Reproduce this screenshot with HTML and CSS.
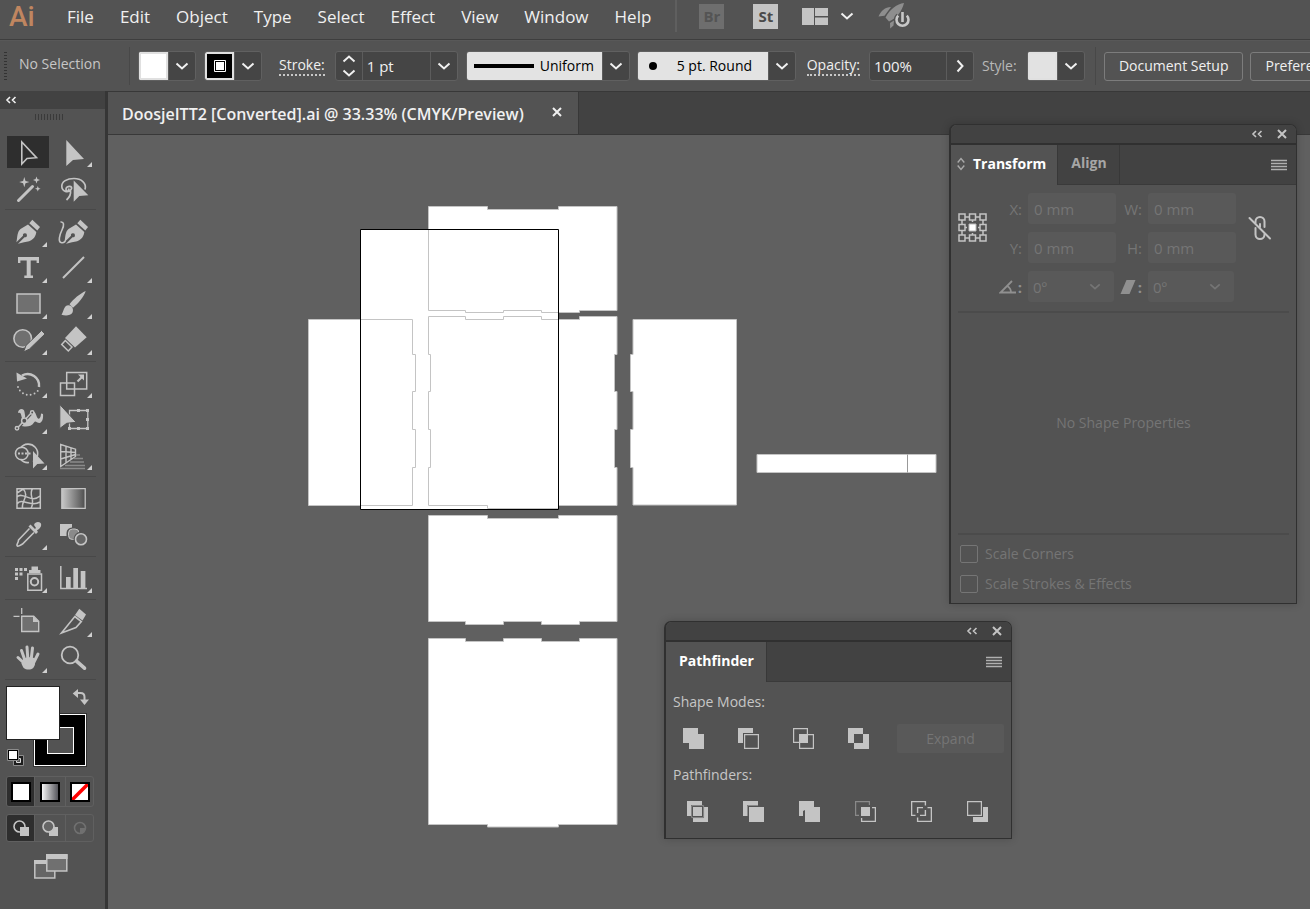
FILE: index.html
```html
<!DOCTYPE html>
<html lang="en">
<head>
<meta charset="utf-8">
<title>DoosjeITT2 [Converted].ai</title>
<link rel="stylesheet" href="styles.css">
</head>
<body>
<svg class="defs" aria-hidden="true">
  <defs>
    <symbol id="caret" viewBox="0 0 14 8"><path d="M1.5 1.5 7 6.5 12.5 1.5" fill="none" stroke="currentColor" stroke-width="2"/></symbol>
    <symbol id="collapse" viewBox="0 0 12 8"><path d="M5 1 2 4l3 3M10.500 1l-3 3 3 3" fill="none" stroke="currentColor" stroke-width="1.600"/></symbol>
    <symbol id="close" viewBox="0 0 10 10"><path d="M1 1 9 9M9 1 1 9" fill="none" stroke="currentColor" stroke-width="2"/></symbol>
    <symbol id="menu" viewBox="0 0 16 12"><path d="M0 1.500h16M0 4.500h16M0 7.500h16M0 10.500h16" stroke="currentColor" stroke-width="1.300"/></symbol>
    <linearGradient id="ramp"><stop offset="0" stop-color="#c8c8c8"/><stop offset="1" stop-color="#4c4c4c"/></linearGradient>
    <linearGradient id="ramp2"><stop offset="0" stop-color="#fff"/><stop offset="1" stop-color="#4c4c52"/></linearGradient>
    <g id="pen">
      <path d="M32.300 219.800 40 227 37.300 230.500 29.300 223.300Z"/>
      <path d="M28 224.500 36.300 232C35.500 238 32 241.500 24 242.300L18 243.800 24.500 237.200A2 2 0 1 0 23 235.700L16.400 242.300C17.500 237 17 232 20.500 229Z"/>
    </g>
  </defs>
</svg>

<header class="menubar">
  <span class="logo">Ai</span>
  <nav class="menus" aria-label="Main menu">
    <button>File</button><button>Edit</button><button>Object</button><button>Type</button><button>Select</button><button>Effect</button><button>View</button><button>Window</button><button>Help</button>
  </nav>
  <div class="apps">
    <button class="app app-off">Br</button>
    <button class="app">St</button>
    <button class="arrange" aria-label="Arrange documents">
      <svg width="26" height="17" viewBox="0 0 26 17" fill="#c4c4c4"><path d="M0 0h12v17H0zM13 0h13v8H13zM13 9.500h13V17H13z"/></svg>
      <svg width="14" height="8"><use href="#caret"/></svg>
    </button>
    <button class="rocket" aria-label="GPU performance">
      <svg width="34" height="28" viewBox="876 2 34 28">
        <path d="M902 3c-7 1-14 6-18.500 14.500l3.500 4C895 18 900 11 902 3ZM889 7c-6 0-10 4-12.500 9.500l6-.8ZM888 23l4-2.500-.5 5-3.300 3Z" fill="#8e8e8e"/>
        <path d="M896.200 15.600a6 6 0 1 0 8.600 0M900.500 12v10" fill="none" stroke="#535353" stroke-width="5"/>
        <path d="M896.200 15.600a6 6 0 1 0 8.600 0M900.500 12v10" fill="none" stroke="#c8c8c8" stroke-width="2.600"/>
      </svg>
    </button>
  </div>
</header>

<section class="controlbar" aria-label="Control">
  <span class="grip"></span>
  <span class="selection">No Selection</span>
  <span class="rule"></span>
  <div class="combo combo-fill"><button class="swatch" aria-label="Fill"></button><button class="drop" aria-label="Fill options"><svg width="14" height="8"><use href="#caret"/></svg></button></div>
  <div class="combo combo-stroke"><button class="swatch swatch-black" aria-label="Stroke"><svg width="12" height="12" viewBox="0 0 12 12"><path d="M.5.5h11v11H.5z" fill="#000" stroke="#fff"/><path d="M2 2h8v8H2z" fill="#fff"/></svg></button><button class="drop" aria-label="Stroke options"><svg width="14" height="8"><use href="#caret"/></svg></button></div>
  <label class="dotted" for="weight">Stroke:</label>
  <div class="combo combo-weight">
    <div class="stepper">
      <button aria-label="Increase"><svg class="flip" width="14" height="8"><use href="#caret"/></svg></button>
      <button aria-label="Decrease"><svg width="14" height="8"><use href="#caret"/></svg></button>
    </div>
    <input id="weight" value="1 pt">
    <button class="drop" aria-label="Weights"><svg width="14" height="8"><use href="#caret"/></svg></button>
  </div>
  <div class="combo combo-profile">
    <div class="face"><svg width="60" height="5"><path d="M0 0h60v4H0z"/></svg><select aria-label="Width profile"><option>Uniform</option></select></div>
    <button class="drop" aria-label="Profiles"><svg width="14" height="8"><use href="#caret"/></svg></button>
  </div>
  <div class="combo combo-brush">
    <div class="face"><svg width="8" height="8"><circle cx="4" cy="4" r="4"/></svg><select aria-label="Brush"><option>5 pt. Round</option></select></div>
    <button class="drop" aria-label="Brushes"><svg width="14" height="8"><use href="#caret"/></svg></button>
  </div>
  <label class="dotted" for="opacity">Opacity:</label>
  <div class="combo combo-opacity">
    <input id="opacity" value="100%">
    <button class="drop" aria-label="Opacity slider"><svg width="8" height="14" viewBox="0 0 8 14"><path d="M1.500 1.500 6.500 7l-5 5.500" fill="none" stroke="currentColor" stroke-width="2"/></svg></button>
  </div>
  <span class="style-label">Style:</span>
  <div class="combo combo-style"><button class="swatch swatch-grey" aria-label="Graphic style"></button><button class="drop" aria-label="Styles"><svg width="14" height="8"><use href="#caret"/></svg></button></div>
  <span class="rule rule-end"></span>
  <button class="push">Document Setup</button>
  <button class="push">Preferences</button>
</section>

<div class="workspace">
  <aside class="tools" aria-label="Tools">
    <div class="tools-head"><button aria-label="Collapse tools"><svg width="12" height="8"><use href="#collapse"/></svg></button></div>
    <div class="tools-grip"></div>

    <div class="tool-group">
      <button class="tool tool-on" aria-label="Selection"><svg viewBox="6 134 45 36"><path d="M21.800 142v22l5.200-5.500 9.500-.8Z" fill="none" stroke="#c4c4c4" stroke-width="1.600"/></svg></button>
      <button class="tool more" aria-label="Direct selection"><svg viewBox="51 134 45 36"><path d="M66.300 140v26l6.700-6 11-1Z"/></svg></button>
      <button class="tool" aria-label="Magic wand"><svg viewBox="6 170 45 36"><path d="M18.500 200.500 32.500 186.500" stroke="#c4c4c4" stroke-width="3" stroke-linecap="round"/><path d="M24.300 177l1.200 3.900 3.900 1.200-3.900 1.200-1.200 3.900-1.200-3.900-3.900-1.200 3.900-1.200ZM36.500 176.500l.9 2.600 2.600.9-2.600.9-.9 2.600-.9-2.600-2.600-.9 2.600-.9ZM37.800 186l.8 2 2 .8-2 .8-.8 2-.8-2-2-.8 2-.8Z"/></svg></button>
      <button class="tool" aria-label="Lasso"><svg viewBox="51 170 45 36"><g fill="none" stroke="#c4c4c4" stroke-width="1.700"><path d="M85 189.500C87 183 81 178.500 74 178.500S61.500 181.500 61.800 186.500 68 193.500 71 189.500 66 185.500 66 189 69.500 191.500 68.500 188.500M70.500 190.500C71 194 70 197 66.500 200"/></g><path d="M73.700 180.500v21.200l5.600-5.700 9-.7Z"/></svg></button>
    </div>

    <div class="tool-group">
      <button class="tool more" aria-label="Pen"><svg viewBox="6 214 45 36"><use href="#pen"/></svg></button>
      <button class="tool" aria-label="Curvature"><svg viewBox="51 214 45 36"><use href="#pen" x="48"/><path d="M60.500 222C64 221.500 64.500 225 62 230S58 241.500 61 242.500 64 242 65.500 241" fill="none" stroke="#c4c4c4" stroke-width="1.600"/></svg></button>
      <button class="tool more" aria-label="Type tool"><svg viewBox="6 250 45 36"><path d="M18 257h21v6h-2.400v-2.600H30.700v15.200H33V278h-8.700v-2.400h2.400v-15.200h-6.300V263H18Z"/></svg></button>
      <button class="tool more" aria-label="Line segment"><svg viewBox="51 250 45 36"><path d="M63 278 84 257" stroke="#c4c4c4" stroke-width="2"/></svg></button>
      <button class="tool more" aria-label="Rectangle"><svg viewBox="6 286 45 36"><path d="M17 294h23v19H17z" fill="#707070" stroke="#c4c4c4" stroke-width="1.500"/></svg></button>
      <button class="tool more" aria-label="Paintbrush"><svg viewBox="51 286 45 36"><path d="M85.700 291C80 293.500 73.500 299 69.500 304.300L73 307.700C78 303.500 84 297 85.700 291ZM68.500 305.200C63.500 305.500 64 311 61.500 314.700 65 316 70.500 316 72.500 312.500 74 309 72 305.500 68.500 305.200Z"/></svg></button>
      <button class="tool more" aria-label="Shaper"><svg viewBox="6 322 45 36"><circle cx="22.700" cy="338.500" r="8.800" fill="#707070" stroke="#c4c4c4" stroke-width="1.600"/><path d="M23.500 352 26 345.500 41.500 330.500 45 334 29.500 349Z" stroke="#535353" stroke-width="1"/></svg></button>
      <button class="tool more" aria-label="Eraser"><svg viewBox="51 322 45 36"><path d="M76 326.300 86.700 337.300 75 347.500 65 338Z"/><path d="M65.300 340.500 72 347 68.300 351 61.700 344.500Z" fill="none" stroke="#c4c4c4" stroke-width="1.500"/></svg></button>
    </div>

    <div class="tool-group tool-group-tight">
      <button class="tool more" aria-label="Rotate"><svg viewBox="6 365 45 36"><path d="M22 375.500A11.500 11.500 0 0 1 39 387" fill="none" stroke="#c4c4c4" stroke-width="2.500"/><path d="M16.500 372.500 27 378.500 17 381.500Z"/><path d="M18 387A11.500 11.500 0 0 0 39 389" fill="none" stroke="#c4c4c4" stroke-width="1.900" stroke-linecap="round" stroke-dasharray="0 4"/></svg></button>
      <button class="tool more" aria-label="Scale"><svg viewBox="51 365 45 36"><g fill="none" stroke="#c4c4c4" stroke-width="1.500"><path d="M66.700 372.500h20v16.500h-20zM60.500 383h14v12.500h-14z"/><path d="M77.500 381.500l4.500-4.500" stroke-width="2.200"/></g><path d="M84 374.500v6l-6-6Z"/></svg></button>
      <button class="tool more" aria-label="Width"><svg viewBox="6 401 45 36"><path d="M18 413C18 408.500 24 407.500 24.500 412L25.500 418C27.500 420 29.500 414 31.500 412.500 36 409.500 36 417 38 418.500 40 419.500 41 416 41 413.500L43 414C43.500 419 42 422.500 39.500 423 36.500 423 35.500 420 34 422.500 31 427.500 24 427 20.500 425.500 18 423.500 23.500 421 21.500 416.500 21 413.500 20.500 412 18 413Z"/><path d="M17 428.500 32 412" stroke="#535353" stroke-width="3.500"/><path d="M17 428.500 32 412" stroke="#c4c4c4" stroke-width="1.500"/><g fill="#535353" stroke="#c4c4c4" stroke-width="1.500"><circle cx="24.300" cy="420.700" r="2.700"/><circle cx="17" cy="428.300" r="1.700"/><circle cx="32.200" cy="412.500" r="1.700"/></g></svg></button>
      <button class="tool" aria-label="Free transform"><svg viewBox="51 401 45 36"><path d="M69.500 410.500h18.300v18H69.500z" fill="none" stroke="#c4c4c4" stroke-width="1.300"/><path d="M68 427h3v3h-3zM77 427h3v3h-3zM86 427h3v3h-3zM86 418h3v3h-3zM86 409h3v3h-3zM77 409h3v3h-3z"/><path d="M59.800 404.500v24l6.900-5.200 9.500-1Z" stroke="#535353"/></svg></button>
      <button class="tool more" aria-label="Shape builder"><svg viewBox="6 437 45 36"><g fill="none" stroke="#c4c4c4" stroke-width="1.600"><circle cx="21.800" cy="453.500" r="6.300"/><path d="M20.500 448A9.500 9.500 0 1 1 33 461.800M20.500 459a9.500 9.500 0 0 0 8.500 3.500"/></g><path d="M18 452.600h2v2h-2zM21.500 452.600h2v2h-2zM25 452.600h2v2h-2zM28.500 452.600h2v2h-2z"/><path d="M33 451v17.500l4.300-4.500 7.200-.5Z"/></svg></button>
      <button class="tool more" aria-label="Perspective grid"><svg viewBox="51 437 45 36"><path d="M60.700 444.500v22L75.500 456.500v-7.300ZM60.700 451.500 75.500 452.500M60.700 459 75.500 454.500M66 446v17M71 448v12" fill="none" stroke="#c4c4c4" stroke-width="1.400"/><path d="M76 455h4M74 458.500h9M70 462h14M65 465.500h20M60 468.500h25" stroke="#8a8a8a" stroke-width="1.300"/></svg></button>
    </div>

    <div class="tool-group">
      <button class="tool" aria-label="Mesh"><svg viewBox="6 481 45 36"><path d="M17 488.700h23.300v19.600H17zM17 497C23 491 31 504 40 496M17 504C22 497 30 508 40 502M23 488.700C30 496 21 501 22.500 508.300M32.500 488.700C28 495 36 500 31 508.300M17 493 24 488.700" fill="none" stroke="#c4c4c4" stroke-width="1.500"/></svg></button>
      <button class="tool" aria-label="Gradient"><svg viewBox="51 481 45 36"><path d="M61.800 488.700h23.400v19.600H61.800z" fill="url(#ramp)" stroke="#c4c4c4" stroke-width="1.300"/></svg></button>
      <button class="tool more" aria-label="Eyedropper"><svg viewBox="6 517 45 36"><path d="M31.500 525.500 35 529 35.500 528.500C37 524 40 522 40.500 524 41.500 527 38 528.500 37 530.500L38 532 36 534 28.500 526.500 30.500 524.500Z"/><path d="M34 525C35 521.500 39 521.500 40.500 523S41 528 37.500 530Z"/><path d="M29.500 528.500 18.500 540C18.500 543 16.500 544 17 545.500S20 545.500 22.500 544L34 532.500" fill="none" stroke="#c4c4c4" stroke-width="1.600"/></svg></button>
      <button class="tool" aria-label="Blend"><svg viewBox="51 517 45 36"><path d="M60 524h12v12H60z"/><rect x="68" y="529" width="11" height="10.500" rx="4" fill="#8a8a8a" stroke="#535353" stroke-width="3"/><rect x="68.500" y="529" width="10.500" height="10.500" rx="4" fill="#8a8a8a" stroke="#c4c4c4"/><circle cx="81" cy="539.200" r="5.500" fill="#535353" stroke="#535353" stroke-width="4"/><circle cx="81" cy="539.200" r="5.500" fill="#666" stroke="#c4c4c4" stroke-width="1.600"/></svg></button>
    </div>

    <div class="tool-group tool-group-tight">
      <button class="tool more" aria-label="Symbol sprayer"><svg viewBox="6 560 45 36"><path d="M15 568h3v3h-3zM19.500 568h3v3h-3zM24 568h3v3h-3zM15 572.500h3v3h-3zM19.500 572.500h3v3h-3zM15 577h3v3h-3zM31.500 566.500h6.500v5h-6.500zM29 570h11.500v3H29z"/><path d="M27.800 574h13.700v16.300H27.800z" fill="none" stroke="#c4c4c4" stroke-width="1.500"/><circle cx="34.500" cy="581.700" r="3.700" fill="none" stroke="#c4c4c4" stroke-width="2"/></svg></button>
      <button class="tool more" aria-label="Column graph"><svg viewBox="51 560 45 36"><path d="M60.800 566v22.500H87" fill="none" stroke="#c4c4c4" stroke-width="1.500"/><path d="M66 577h4.700v11H66zM73.300 568h4.700v20h-4.700zM80.700 571h4.700v17h-4.700z"/></svg></button>
    </div>

    <div class="tool-group">
      <button class="tool" aria-label="Artboard"><svg viewBox="6 604 45 36"><path d="M21.700 608v6M13.500 616.300h6" stroke="#c4c4c4" stroke-width="1.300"/><path d="M21.700 616.300h12l5 5v10.200h-17z" fill="#707070" stroke="#c4c4c4" stroke-width="1.400"/><path d="M33 616l6 6h-6z"/></svg></button>
      <button class="tool more" aria-label="Slice"><svg viewBox="51 604 45 36"><path d="M79.300 608.700 86 614.500 82.500 620.500 75 615Z"/><path d="M74.800 616.500 81.300 621.500 76 627.500 61.500 633Z" fill="none" stroke="#c4c4c4" stroke-width="1.600"/></svg></button>
      <button class="tool more" aria-label="Hand"><svg viewBox="6 640 45 36"><g stroke="#c4c4c4" stroke-width="3" stroke-linecap="round"><path d="M18 657.500 25 664M21.500 650.500 25.500 662M27 647 28 661M32.500 648 31 661M38 654 33 664"/></g><path d="M23 659 28 657 34.500 658 35 664C34 668 32.500 669.500 28.500 669.500S23 668 21.500 663.500Z"/></svg></button>
      <button class="tool" aria-label="Zoom"><svg viewBox="51 640 45 36"><circle cx="70" cy="655" r="8.300" fill="none" stroke="#c4c4c4" stroke-width="1.800"/><path d="M76.500 661.200 84.500 668.200" stroke="#c4c4c4" stroke-width="3.600" stroke-linecap="round"/></svg></button>
    </div>

    <div class="paint">
      <button class="paint-stroke" aria-label="Stroke colour"><span></span></button>
      <button class="paint-fill" aria-label="Fill colour"></button>
      <button class="paint-swap" aria-label="Swap fill and stroke"><svg width="17" height="17" viewBox="72 689 17 17"><path d="M77 693h3.500q4 0 4 4v3" fill="none" stroke="#c4c4c4" stroke-width="2"/><path d="M72.700 693.500 78 689v9ZM80 699.500h9L84.500 705Z"/></svg></button>
      <button class="paint-reset" aria-label="Default fill and stroke"><svg width="18" height="18" viewBox="0 0 18 18"><path d="M6.500 6.500h10v10h-10z" fill="#1c1c1c" stroke="#8c8c8c"/><path d="M9.500 9.500h4v4h-4z" fill="#535353" stroke="#ddd"/><path d="M.5.500h11v11H.5z" fill="#000" stroke="#8c8c8c"/><path d="M2 2h8v8H2z" fill="#fff"/></svg></button>
    </div>

    <div class="modes">
      <button class="on" aria-label="Color"><svg width="20" height="20" viewBox="0 0 20 20"><path d="M1 1h18v18H1z" fill="#fff" stroke="#000" stroke-width="2"/></svg></button>
      <button aria-label="Gradient fill"><svg width="20" height="20" viewBox="0 0 20 20"><path d="M1 1h18v18H1z" fill="url(#ramp2)" stroke="#000" stroke-width="2"/></svg></button>
      <button aria-label="None"><svg width="20" height="20" viewBox="0 0 20 20"><path d="M1 1h18v18H1z" fill="#fff"/><path d="M2 18 18 2" stroke="#f00" stroke-width="3.500"/><path d="M1 1h18v18H1z" fill="none" stroke="#000" stroke-width="2"/></svg></button>
    </div>
    <div class="modes modes-draw">
      <button class="on" aria-label="Draw normal"><svg width="16" height="16" viewBox="0 0 16 16"><circle cx="6.500" cy="6.500" r="5.500" fill="none" stroke="#c4c4c4" stroke-width="1.600"/><path d="M7 7h9v9H7z" fill="#c4c4c4"/></svg></button>
      <button aria-label="Draw behind"><svg width="16" height="16" viewBox="0 0 16 16"><path d="M7 7h9v9H7z" fill="#c4c4c4"/><circle cx="6.500" cy="6.500" r="5.500" fill="#666" stroke="#c4c4c4" stroke-width="1.600"/></svg></button>
      <button aria-label="Draw inside"><svg width="16" height="16" viewBox="0 0 16 16"><circle cx="8" cy="8" r="5.500" fill="none" stroke="#707070" stroke-width="1.600"/><path d="M8 8h5.500A5.500 5.500 0 0 1 8 13.500z" fill="#707070"/></svg></button>
    </div>
    <button class="screen-mode" aria-label="Screen mode"><svg width="34" height="25" viewBox="0 0 34 25"><path d="M.8 7h20v17H.8z" fill="#666" stroke="#c4c4c4" stroke-width="1.500"/><path d="M0 6h21v4H0z" fill="#c4c4c4"/><path d="M12.800 1h20v16h-20z" fill="#707070" stroke="#c4c4c4" stroke-width="1.500"/><path d="M12 0h21.600v5H12z" fill="#c4c4c4"/></svg></button>
  </aside>

  <main class="document">
    <div class="tabbar">
      <div class="tab"><span>DoosjeITT2 [Converted].ai @ 33.33% (CMYK/Preview)</span><button aria-label="Close document"><svg width="10" height="10"><use href="#close"/></svg></button></div>
    </div>
    <div class="canvas">
      <svg width="1202" height="774" viewBox="108 135 1202 774" aria-label="Artwork">
        <path d="M360.500 229.500h198v280h-198z" fill="#fff"/>
        <g fill="#fff" stroke="#c4c4c4">
          <path d="M428.500 206.500H487.500V209.500H558.500V206.500H617V310.500H579.500V312.500H541.500V310.500H503.500V312.500H465.500V310.500H428.500Z"/>
          <path d="M428.500 316.500H465.500V319.500H503.500V316.500H541.500V319.500H579.500V316.500H617V354.500H614.500V391.500H617V429.500H614.500V467.500H617V505.500H558.500V508.500H487.500V505.500H428.500V467.500H430.500V429.500H428.500V391.500H430.500V354.500H428.500Z"/>
          <path d="M308.500 319.500H412.500V354.500H415.500V391.500H412.500V429.500H415.500V467.500H412.500V505.500H308.500Z"/>
          <path d="M633 319.500H736.500V505H633V467.500H630.500V429.500H633V391.500H630.500V354.500H633Z"/>
          <path d="M428.500 515.500H487.500V518.500H558.500V515.500H617V621.500H579.500V624.500H541.500V621.500H503.500V624.500H465.500V621.500H428.500Z"/>
          <path d="M428.500 638.500H465.500V641.500H503.500V638.500H541.500V641.500H579.500V638.500H617V824.500H558.500V827H487.500V824.500H428.500Z"/>
          <path d="M757 454.500h179v18h-179z"/>
          <path d="M907.500 454.500v18" stroke="#999"/>
        </g>
        <path d="M360.500 229.500h198v280h-198z" fill="none" stroke="#000"/>
      </svg>
    </div>

    <section class="panel panel-transform" aria-label="Transform panel">
      <div class="panel-head"><button aria-label="Collapse"><svg width="12" height="8"><use href="#collapse"/></svg></button><button aria-label="Close"><svg width="10" height="10"><use href="#close"/></svg></button></div>
      <div class="panel-tabs">
        <button class="panel-tab active"><svg width="8" height="14" viewBox="0 0 8 14"><path d="M.7 5.500 4 1.500l3.300 4M.7 8.500 4 12.500l3.300-4" fill="none" stroke="#aaa" stroke-width="1.400"/></svg>Transform</button>
        <button class="panel-tab">Align</button>
        <button class="panel-menu" aria-label="Panel menu"><svg width="16" height="12"><use href="#menu"/></svg></button>
      </div>
      <div class="transform-grid">
        <button class="refpoint" aria-label="Reference point"><svg width="30" height="30" viewBox="0 0 30 30"><path d="M4 4h21v21H4zM14.500 4v21M4 14.500h21" fill="none" stroke="#c4c4c4" stroke-width="1.500"/><g fill="#535353" stroke="#c4c4c4" stroke-width="1.500"><path d="M1 1h6v6H1zM11.500 1h6v6h-6zM22 1h6v6h-6zM1 11.500h6v6H1zM22 11.500h6v6h-6zM1 22h6v6H1zM11.500 22h6v6h-6zM22 22h6v6h-6z"/></g><path d="M9 9h11v11H9z" fill="#535353"/><path d="M11 11h7v7h-7z" fill="#fff" stroke="#bbb"/></svg></button>
        <label for="tx">X:</label><input id="tx" value="0 mm" disabled>
        <label for="tw">W:</label><input id="tw" value="0 mm" disabled>
        <button class="link" aria-label="Constrain proportions"><svg width="24" height="26" viewBox="0 0 24 26" fill="none" stroke="#c4c4c4" stroke-width="2" stroke-linecap="round"><path d="M7.500 8V6.500a4.500 4.500 0 0 1 9 0V12M16.500 19v.5a4.500 4.500 0 0 1-9 0V13M12 9v3"/><path d="M1.500 3 22 23.500"/></svg></button>
        <label for="ty">Y:</label><input id="ty" value="0 mm" disabled>
        <label for="th">H:</label><input id="th" value="0 mm" disabled>
        <label for="ta" class="icon-label"><svg width="17" height="14" viewBox="0 0 17 14" role="img" aria-label="Rotate"><path d="M13 1 1.500 12.500H17M8 6q4 2 4 6.500" fill="none" stroke="#909090" stroke-width="1.800"/></svg>:</label>
        <div class="pick"><select id="ta" disabled><option>0º</option></select><svg width="12" height="7"><use href="#caret"/></svg></div>
        <label for="ts" class="icon-label"><svg width="16" height="14" viewBox="0 0 16 14" role="img" aria-label="Shear"><path d="M6.500 0h9L9.500 14h-9z" fill="#909090"/></svg>:</label>
        <div class="pick"><select id="ts" disabled><option>0º</option></select><svg width="12" height="7"><use href="#caret"/></svg></div>
      </div>
      <p class="no-props">No Shape Properties</p>
      <div class="checks">
        <label><input type="checkbox" disabled>Scale Corners</label>
        <label><input type="checkbox" disabled>Scale Strokes &amp; Effects</label>
      </div>
    </section>

    <section class="panel panel-pathfinder" aria-label="Pathfinder panel">
      <div class="panel-head"><button aria-label="Collapse"><svg width="12" height="8"><use href="#collapse"/></svg></button><button aria-label="Close"><svg width="10" height="10"><use href="#close"/></svg></button></div>
      <div class="panel-tabs">
        <button class="panel-tab active">Pathfinder</button>
        <button class="panel-menu" aria-label="Panel menu"><svg width="16" height="12"><use href="#menu"/></svg></button>
      </div>
      <div class="pf-body">
        <h2>Shape Modes:</h2>
        <div class="pf-row">
          <button aria-label="Unite"><svg viewBox="0 0 21 21"><path d="M0 0h15v6h6v15H6v-6H0z"/></svg></button>
          <button aria-label="Minus front"><svg viewBox="0 0 21 21"><path d="M0 0h15v5H5v10H0z"/><path d="M6.600 6.600h13.800v13.800H6.600z" fill="none" stroke="#c4c4c4" stroke-width="1.200"/></svg></button>
          <button aria-label="Intersect"><svg viewBox="0 0 21 21"><path d="M.6.600h13.800v13.800H.6zM6.600 6.600h13.800v13.800H6.600z" fill="none" stroke="#c4c4c4" stroke-width="1.200"/><path d="M6 6h9v9H6z"/></svg></button>
          <button aria-label="Exclude"><svg viewBox="0 0 21 21"><path d="M0 0h15v6h6v15H6v-6H0zM6 6v9h9V6z" fill-rule="evenodd"/></svg></button>
          <button class="expand" disabled>Expand</button>
        </div>
        <h2>Pathfinders:</h2>
        <div class="pf-row pf-row-wide">
          <button aria-label="Divide"><svg viewBox="0 0 21 21"><path d="M0 0h15v4H4v11H0zM17 6h4v15H6v-4h11z"/><path d="M6 6h9v9H6z"/><path d="M4.600 4.600h12v12h-12z" fill="none" stroke="#8a8a8a" stroke-width="1"/></svg></button>
          <button aria-label="Trim"><svg viewBox="0 0 21 21"><path d="M0 0h15v4H4v11H0zM6 6h15v15H6z"/><path d="M15 4.500H4.500V15" fill="none" stroke="#8a8a8a"/></svg></button>
          <button aria-label="Merge"><svg viewBox="0 0 21 21"><path d="M0 0h15v6h6v15H6V9L4 10v5H0z"/></svg></button>
          <button aria-label="Crop"><svg viewBox="0 0 21 21"><path d="M4 14.400H.6V.6h13.800V4" fill="none" stroke="#8a8a8a" stroke-width="1.200"/><path d="M17 6.600h3.400v13.800H6.600V17" fill="none" stroke="#c4c4c4" stroke-width="1.300"/><path d="M6 6h9v9H6z"/></svg></button>
          <button aria-label="Outline"><svg viewBox="0 0 21 21"><path d="M4.500 14.400H.6V.6h13.800V4.500M16.500 6.600h3.900v13.800H6.600v-3.900M12 6.600H6.600V12M14.400 9v5.400H9" fill="none" stroke="#c4c4c4" stroke-width="1.400"/></svg></button>
          <button aria-label="Minus back"><svg viewBox="0 0 21 21"><path d="M16 6h5v15H6v-5h10z"/><path d="M.6.600h13.800v13.800H.6z" fill="none" stroke="#c4c4c4" stroke-width="1.200"/></svg></button>
        </div>
      </div>
    </section>
  </main>
</div>
</body>
</html>
```
FILE: styles.css
```css
* { box-sizing: border-box; }

body {
  margin: 0;
  height: 100vh;
  display: flex;
  flex-direction: column;
  overflow: hidden;
  background: #535353;
  color: #f0f0f0;
  font: 14px/20px "Open Sans", "Noto Sans", sans-serif;
}

button, input, select {
  margin: 0;
  padding: 0;
  border: 0;
  background: none;
  color: inherit;
  font: inherit;
}

button { display: flex; align-items: center; justify-content: center; }
svg { display: block; flex: none; }
.defs { position: absolute; width: 0; height: 0; }

/* Menu bar */
.menubar {
  flex: none;
  display: flex;
  height: 40px;
  border-bottom: 1px solid #3e3e3e;
}
.logo {
  width: 54px;
  padding-left: 9px;
  color: #c08660;
  font: 500 28px/33px Roboto, sans-serif;
}
.menus {
  display: flex;
  height: 34px;
  padding-right: 11px;
  font-size: 17px;
}
.menus button { padding: 0 13px; }
.apps {
  display: flex;
  align-items: center;
  height: 32px;
  padding-left: 22px;
  border-left: 2px solid #5f5f5f;
}
.app {
  width: 25px;
  height: 25px;
  margin-right: 29px;
  background: #c4c4c4;
  color: #4a4a4a;
  font-size: 15px;
  font-weight: 700;
}
.app-off { background: #6e6e6e; color: #545454; }
.app + .arrange { margin-left: -5px; }
.arrange { gap: 12px; margin-right: 24px; }

/* Control bar */
.controlbar {
  flex: none;
  display: flex;
  align-items: center;
  height: 51px;
  padding-left: 4px;
  border-top: 1px solid #585858;
  white-space: nowrap;
}
.controlbar > * { flex: none; }
.grip {
  width: 3px;
  height: 28px;
  margin-right: 12px;
  background: repeating-linear-gradient(#333 0 1px, #535353 1px 3px);
}
.selection { width: 110px; padding-bottom: 4px; color: #c6c6c6; }
.rule { width: 1px; height: 38px; margin-right: 8px; background: #484848; }
.rule-end { margin: 0 8px 0 10px; }
.combo {
  display: flex;
  height: 30px;
  border: 1px solid #606060;
  border-radius: 3px;
  background: #454545;
  overflow: hidden;
}
.drop { width: 27px; border-left: 1px solid #5c5c5c; }
.swatch { width: 29px; background: #fff; border: 2px solid #e0e0e0; }
.swatch-black { background: #000; }
.swatch-grey { background: #e2e2e2; }
.combo-fill, .combo-stroke, .combo-style { width: 58px; }
.combo-fill { margin-right: 8px; }
.combo-stroke { margin-right: 17px; }
.dotted { border-bottom: 2px dotted #c8c8c8; line-height: 18px; }
.combo-weight { width: 123px; margin: 0 8px 0 10px; }
.stepper { display: grid; width: 27px; border-right: 1px solid #5c5c5c; }
.flip { transform: rotate(180deg); }
.combo input { flex: 1; min-width: 0; padding-left: 4px; font-size: 15px; }
.face {
  flex: 1;
  display: flex;
  align-items: center;
  justify-content: space-between;
  padding: 0 7px;
  background: #e3e3e3;
  color: #000;
}
.face select { appearance: none; }
.combo-profile { width: 164px; margin-right: 7px; }
.combo-brush { width: 159px; margin-right: 11px; }
.combo-brush .face { padding: 0 15px 0 11px; }
.combo-opacity { width: 105px; margin: 0 8px 0 9px; }
.style-label { width: 45px; color: #b8b8b8; }
.push {
  height: 29px;
  margin-right: 7px;
  padding: 0 14px;
  border: 1px solid #7c7c7c;
  border-radius: 3px;
}

/* Workspace */
.workspace { flex: 1; display: flex; min-height: 0; }
.tools {
  flex: none;
  width: 108px;
  background: #535353;
  border-right: 3px solid #363636;
}
.tools-head { height: 18px; background: #424242; }
.tools-head button { width: 22px; height: 18px; }
.tools-grip {
  width: 29px;
  height: 6px;
  margin: 5px 0 10px 35px;
  background: repeating-linear-gradient(90deg, #3a3a3a 0 1px, #535353 1px 3px);
}
.tool-group {
  display: grid;
  grid-template-columns: 45px 45px;
  width: 91px;
  margin-left: 5px;
  padding: 4px 0 3px 1px;
  border-bottom: 1px solid #484848;
}
.tool-group-tight { padding-top: 3px; }
.tool { position: relative; height: 36px; fill: #c4c4c4; }
.tool svg { width: 45px; height: 36px; }
.tool-on { background: linear-gradient(#2e2e2e, #2e2e2e) 1px 2px / 42px 32px no-repeat; }
.more::after {
  content: "";
  position: absolute;
  right: 4px;
  bottom: 3px;
  border-left: 5px solid transparent;
  border-bottom: 5px solid #d0d0d0;
}

.paint { position: relative; height: 96px; fill: #c4c4c4; }
.paint button { position: absolute; }
.paint-stroke { left: 34px; top: 34px; width: 52px; height: 52px; border: 1px solid #fff; outline: 1px solid #333; background: #000; }
.paint-stroke span { width: 27px; height: 27px; border: 1px solid #fff; background: #535353; }
.paint-fill { left: 6px; top: 6px; width: 54px; height: 54px; border: 1px solid #222; background: #fff; }
.paint-swap { left: 72px; top: 9px; }
.paint-reset { left: 7px; top: 69px; }

.modes {
  display: grid;
  grid-template-columns: 27px 31px 1fr;
  width: 88px;
  height: 31px;
  margin: 0 0 7px 6px;
  border: 1px solid #606060;
  border-radius: 3px;
  overflow: hidden;
}
.modes button + button { border-left: 1px solid #606060; }
.modes .on { background: #2e2e2e; }
.modes-draw { height: 28px; margin-bottom: 12px; }
.screen-mode { margin-left: 34px; }

/* Document */
.document {
  position: relative;
  flex: 1;
  min-width: 0;
  display: flex;
  flex-direction: column;
}
.tabbar {
  flex: none;
  display: flex;
  height: 44px;
  border-top: 1px solid #383838;
  border-bottom: 1px solid #383838;
  background: #424242;
}
.tab {
  display: flex;
  align-items: center;
  gap: 28px;
  padding: 1px 16px 0 14px;
  border-right: 1px solid #383838;
  background: #535353;
  font-size: 16px;
  font-weight: 600;
}
.tab button { margin-top: -4px; }
.canvas { flex: 1; min-height: 0; overflow: hidden; background: #606060; }

/* Floating panels */
.panel {
  position: absolute;
  width: 348px;
  border: 1px solid #303030;
  border-left-width: 2px;
  border-radius: 7px 7px 0 0;
  background: #535353;
  box-shadow: 0 0 8px rgb(0 0 0 / 20%);
}
.panel-transform { right: 13px; top: 33px; }
.panel-pathfinder { left: 556px; top: 530px; }
.panel-head {
  display: flex;
  justify-content: flex-end;
  gap: 14px;
  height: 20px;
  padding-right: 9px;
  border-bottom: 2px solid #303030;
  border-radius: 6px 6px 0 0;
  background: #424242;
  color: #c4c4c4;
}
.panel-tabs { display: flex; height: 40px; background: #424242; border-bottom: 1px solid #3a3a3a; }
.panel-tab {
  gap: 8px;
  padding: 0 12px 3px 13px;
  border-right: 1px solid #383838;
  color: #a6a6a6;
  font-weight: 700;
}
.panel-tab.active { height: 40px; background: #535353; color: #fff; }
.panel-transform .active { padding: 0 11px 3px 6px; }
.panel-menu { margin-left: auto; padding-right: 9px; color: #b0b0b0; }

.transform-grid {
  display: grid;
  grid-template-columns: 29px 29px 88px 20px 88px 36px;
  grid-template-rows: repeat(3, 31px);
  gap: 8px 6px;
  align-items: center;
  margin: 0 7px;
  padding: 8px 0 9px;
  border-bottom: 2px solid #4b4b4b;
  color: #757575;
  font-size: 15px;
}
.refpoint { grid-row: 1 / 3; }
.link { grid-column: 6; grid-row: 1 / 3; }
.transform-grid label { text-align: right; white-space: nowrap; }
.transform-grid label[for="ty"], .transform-grid label[for="ta"] { grid-column: 2; }
.transform-grid input { width: 100%; height: 31px; padding-left: 6px; border-radius: 3px; background: #595959; }
.transform-grid .icon-label { display: flex; align-items: center; justify-content: flex-end; gap: 2px; color: #909090; font-weight: 700; }
.pick { display: grid; grid-template-columns: 1fr 25px; align-items: center; width: 86px; height: 31px; border-radius: 3px; background: #595959; }
.pick select { grid-area: 1 / 1 / 2 / 3; width: 100%; height: 31px; padding-left: 5px; appearance: none; opacity: 1; }
.pick svg { grid-area: 1 / 2; }
.no-props {
  display: grid;
  place-items: center;
  height: 222px;
  margin: 0 7px;
  border-bottom: 2px solid #4b4b4b;
  color: #757575;
}
.checks { display: grid; gap: 10px; padding: 9px; color: #757575; }
.checks label { display: flex; align-items: center; gap: 7px; }
.checks input { width: 18px; height: 18px; border: 1px solid #757575; border-radius: 2px; appearance: none; }

.pf-body { padding: 10px 7px 1px; }
.pf-body h2 { margin: 0; color: #c6c6c6; font-size: 14px; font-weight: 400; line-height: 20px; }
.pf-row { display: grid; grid-template-columns: repeat(4, 55px) 111px; height: 53px; align-items: center; }
.pf-row button:not(.expand) { justify-content: flex-start; padding-left: 10px; fill: #c4c4c4; }
.pf-row svg { width: 21px; height: 21px; }
.pf-row-wide { grid-template-columns: repeat(6, 56px); height: 52px; }
.pf-row-wide button:not(.expand) { padding-left: 14px; }
.expand { height: 29px; margin-left: 4px; border-radius: 2px; background: #595959; color: #757575; }
```
